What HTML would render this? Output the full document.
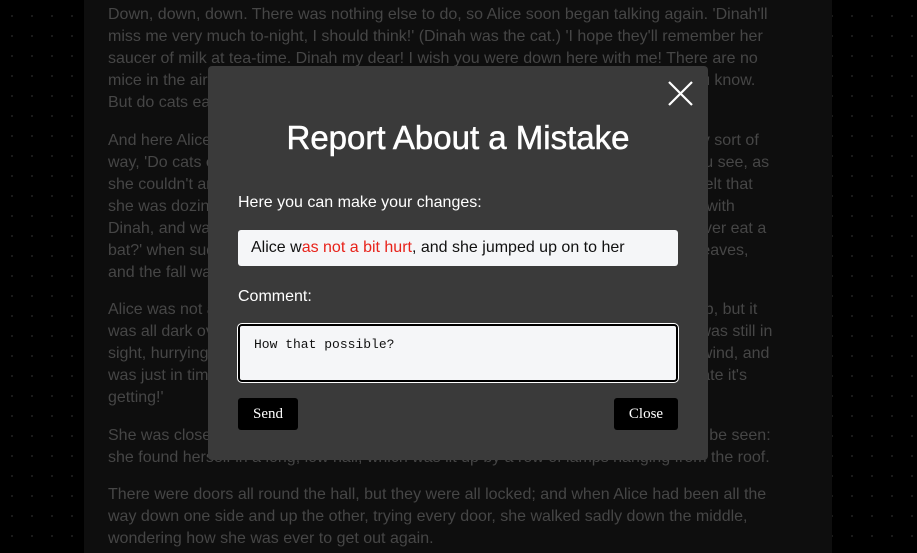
<!DOCTYPE html>
<html><head><style>
html,body{margin:0;padding:0;width:917px;height:553px;overflow:hidden;background:#000;
background-image:radial-gradient(circle,#1c1c1c 1px,transparent 1.2px);background-size:20px 20px;background-position:2px 6px;font-family:"Liberation Sans",sans-serif}
.col{position:absolute;left:84px;top:0;width:748px;height:553px;background:#0e0e0e}
.txt{position:absolute;left:108px;top:4px;height:549px;overflow:hidden;color:#464646;font-size:16px;line-height:22px;white-space:nowrap}
.txt p{margin:0 0 15.5px}
.modal{position:absolute;left:208px;top:66px;width:500px;height:394px;background:#3a3a3a;border-radius:4px;color:#fff}
h1{position:absolute;left:0;width:500px;top:50px;margin:0;text-align:center;font-weight:normal;font-size:33px;line-height:44px;-webkit-text-stroke:0.5px #fff}
.lab{position:absolute;left:30px;font-size:16px}
.inp{position:absolute;left:30px;top:164px;width:440px;height:36px;background:#f5f6f8;border-radius:3px;color:#111;font-size:16px;line-height:36px;box-sizing:border-box;padding-left:13px;white-space:nowrap}
.inp span{color:#e8221a}
.ta{position:absolute;left:30px;top:258px;width:440px;height:58px;box-sizing:border-box;background:#f5f6f8;border:2px solid #000;outline:1px solid #fff;border-radius:4px;font-family:"Liberation Mono",monospace;font-size:13px;color:#111;padding:11px 14px}
.btn{position:absolute;top:332px;height:32px;background:#000;border-radius:3px;color:#fff;font-family:"Liberation Serif",serif;font-size:15px;line-height:32px;text-align:center}
</style></head><body>
<div class="col"></div>
<div class="txt">
<p>Down, down, down. There was nothing else to do, so Alice soon began talking again. 'Dinah'll<br>miss me very much to-night, I should think!' (Dinah was the cat.) 'I hope they'll remember her<br>saucer of milk at tea-time. Dinah my dear! I wish you were down here with me! There are no<br>mice in the air, I'm afraid, but you might catch a bat, and that's very like a mouse, you know.<br>But do cats eat bats, I wonder?'</p>
<p>And here Alice began to get rather sleepy, and went on saying to herself, in a dreamy sort of<br>way, 'Do cats eat bats? Do cats eat bats?' and sometimes, 'Do bats eat cats?' for, you see, as<br>she couldn't answer either question, it didn't much matter which way she put it. She felt that<br>she was dozing off, and had just begun to dream that she was walking hand in hand with<br>Dinah, and was saying to her very earnestly, 'Now, Dinah, tell me the truth: did you ever eat a<br>bat?' when suddenly, thump! thump! down she came upon a heap of sticks and dry leaves,<br>and the fall was over.</p>
<p>Alice was not a bit hurt, and she jumped up on to her feet in a moment: she looked up, but it<br>was all dark overhead; before her was another long passage, and the White Rabbit was still in<br>sight, hurrying down it. There was not a moment to be lost: away went Alice like the wind, and<br>was just in time to hear it say, as it turned a corner, 'Oh my ears and whiskers, how late it's<br>getting!'</p>
<p>She was close behind it when she turned the corner, but the Rabbit was no longer to be seen:<br>she found herself in a long, low hall, which was lit up by a row of lamps hanging from the roof.</p>
<p>There were doors all round the hall, but they were all locked; and when Alice had been all the<br>way down one side and up the other, trying every door, she walked sadly down the middle,<br>wondering how she was ever to get out again.</p>
</div>
<div class="modal">
<svg style="position:absolute;left:460px;top:15px" width="25" height="25" viewBox="0 0 25 25"><path d="M1 1L24 24M24 1L1 24" stroke="#fff" stroke-width="2.2"/></svg>
<h1>Report About a Mistake</h1>
<div class="lab" style="top:128px">Here you can make your changes:</div>
<div class="inp">Alice w<span>as not a bit hurt</span>, and she jumped up on to her</div>
<div class="lab" style="top:222px">Comment:</div>
<div class="ta">How that possible?</div>
<div class="btn" style="left:30px;width:60px">Send</div>
<div class="btn" style="left:406px;width:64px">Close</div>
</div>
</body></html>
